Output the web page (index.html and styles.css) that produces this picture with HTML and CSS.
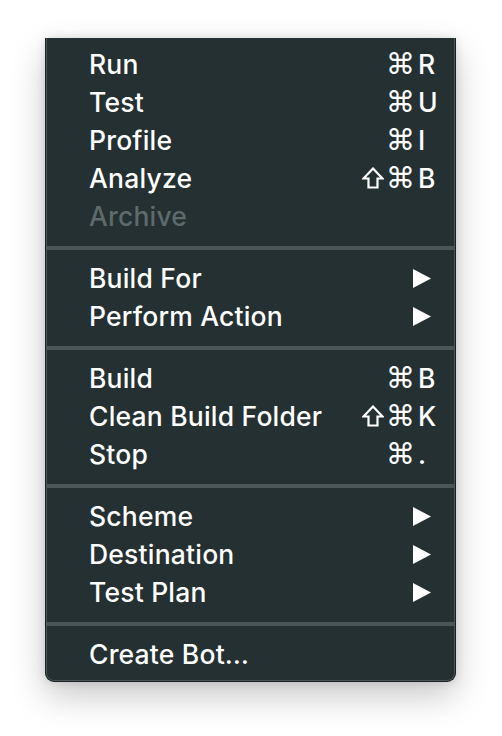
FILE: index.html
```html
<!DOCTYPE html>
<html>
<head>
<meta charset="utf-8">
<link rel="stylesheet" href="styles.css">
</head>
<body>
<div class="menu">
  <div class="row"><span class="label">Run</span><span class="sc"><span class="mods"><span class="cmd">⌘</span></span><span class="key">R</span></span></div>
  <div class="row"><span class="label">Test</span><span class="sc"><span class="mods"><span class="cmd">⌘</span></span><span class="key">U</span></span></div>
  <div class="row"><span class="label">Profile</span><span class="sc"><span class="mods"><span class="cmd">⌘</span></span><span class="key">I</span></span></div>
  <div class="row"><span class="label">Analyze</span><span class="sc"><span class="mods"><svg class="shift" viewBox="0 0 22 22"><path d="M11 1.5 L20.5 11.5 H15.5 V20.5 H6.5 V11.5 H1.5 Z" fill="none" stroke="currentColor" stroke-width="2.2" stroke-linejoin="miter"/></svg><span class="cmd">⌘</span></span><span class="key">B</span></span></div>
  <div class="row disabled"><span class="label">Archive</span></div>
  <div class="sep"></div>
  <div class="row"><span class="label">Build For</span><svg class="arrow" viewBox="0 0 18 19"><path d="M0 0 L18 9.5 L0 19 Z" fill="currentColor"/></svg></div>
  <div class="row"><span class="label">Perform Action</span><svg class="arrow" viewBox="0 0 18 19"><path d="M0 0 L18 9.5 L0 19 Z" fill="currentColor"/></svg></div>
  <div class="sep"></div>
  <div class="row"><span class="label">Build</span><span class="sc"><span class="mods"><span class="cmd">⌘</span></span><span class="key">B</span></span></div>
  <div class="row"><span class="label">Clean Build Folder</span><span class="sc"><span class="mods"><svg class="shift" viewBox="0 0 22 22"><path d="M11 1.5 L20.5 11.5 H15.5 V20.5 H6.5 V11.5 H1.5 Z" fill="none" stroke="currentColor" stroke-width="2.2" stroke-linejoin="miter"/></svg><span class="cmd">⌘</span></span><span class="key">K</span></span></div>
  <div class="row"><span class="label">Stop</span><span class="sc"><span class="mods"><span class="cmd">⌘</span></span><span class="key">.</span></span></div>
  <div class="sep"></div>
  <div class="row"><span class="label">Scheme</span><svg class="arrow" viewBox="0 0 18 19"><path d="M0 0 L18 9.5 L0 19 Z" fill="currentColor"/></svg></div>
  <div class="row"><span class="label">Destination</span><svg class="arrow" viewBox="0 0 18 19"><path d="M0 0 L18 9.5 L0 19 Z" fill="currentColor"/></svg></div>
  <div class="row"><span class="label">Test Plan</span><svg class="arrow" viewBox="0 0 18 19"><path d="M0 0 L18 9.5 L0 19 Z" fill="currentColor"/></svg></div>
  <div class="sep"></div>
  <div class="row"><span class="label">Create Bot…</span></div>
</div>
</body>
</html>
```
FILE: styles.css
```css
html, body {
  margin: 0;
  padding: 0;
  background: #ffffff;
  min-height: 100%;
}
body {
  padding-top: 38px;
  height: 736px;
  box-sizing: border-box;
  font-family: Inter, "Noto Sans", "DejaVu Sans", sans-serif;
}
.menu {
  margin-left: 45px;
  width: 411px;
  box-sizing: border-box;
  background: #243031;
  border: 1px solid #1b2122;
  border-top: none;
  border-radius: 0 0 9px 9px;
  box-shadow: inset 1px 0 0 #4b5657, inset -1px 0 0 #4b5657, inset 0 -1px 0 #4b5657, 0 14px 34px rgba(0,0,0,0.22), 0 0 10px rgba(0,0,0,0.12);
  padding: 7px 1px 8px 1px;
  color: #ffffff;
}
.row {
  height: 38px;
  display: flex;
  align-items: center;
  justify-content: space-between;
  padding-left: 42px;
  padding-right: 17px;
  font-size: 26.5px;
  font-weight: 500;
  letter-spacing: 0.2px;
  line-height: 38px;
}
.row.disabled {
  color: #5e6b6c;
}
.label {
  white-space: nowrap;
}
.sc {
  display: flex;
  align-items: center;
}
.mods {
  display: flex;
  align-items: center;
  gap: 2px;
}
.cmd {
  font-family: "DejaVu Sans", sans-serif;
  font-size: 29px;
  font-weight: 400;
}
.key {
  width: 19px;
  margin-left: 3px;
  text-align: left;
}
.shift {
  width: 22px;
  height: 22px;
  color: #ffffff;
}
.arrow {
  width: 18px;
  height: 19px;
  margin-right: 6px;
  color: #ffffff;
}
.sep {
  height: 4px;
  background: #4a5657;
  margin: 11px 0 9px 0;
}
```
